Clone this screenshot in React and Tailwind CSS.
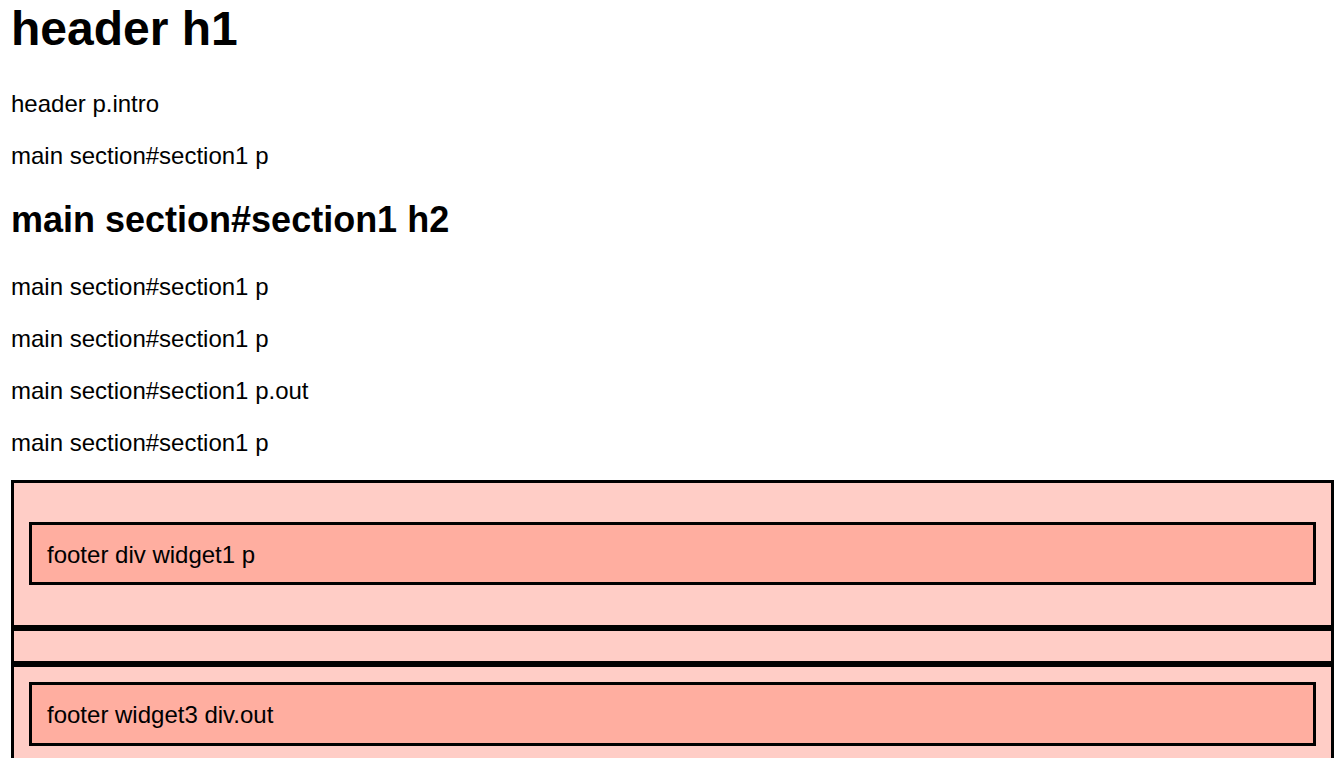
export default function App() {
  return (
    <div className="min-h-screen bg-white pl-[11px] pt-[1px] text-black font-['Liberation_Sans',Arial,sans-serif]">
      <div className="flex flex-col items-start">
        <h1 className="m-0 text-[48px] font-bold leading-[55px]">header h1</h1>
        <p className="mt-[34px] text-[24px] leading-[28px]">header p.intro</p>
        <p className="mt-[24px] text-[24px] leading-[28px]">main section#section1 p</p>
        <h2 className="mt-[29px] text-[36px] font-bold leading-[41px]">main section#section1 h2</h2>
        <p className="mt-[33px] text-[24px] leading-[28px]">main section#section1 p</p>
        <p className="mt-[24px] text-[24px] leading-[28px]">main section#section1 p</p>
        <p className="mt-[24px] text-[24px] leading-[28px]">main section#section1 p.out</p>
        <p className="mt-[24px] text-[24px] leading-[28px]">main section#section1 p</p>
      </div>
      <div className="mt-[23px] flex w-[1323px] flex-col">
        <div className="border-[3px] border-black bg-[#ffcdc6] pl-[15px] pr-[15px] py-[15px]">
          <p className="mt-[24px] mb-[25px] border-[3px] border-black bg-[#ffaea0] px-[15px] pt-[16px] pb-[14px] text-[24px] leading-[27px]">
            footer div widget1 p
          </p>
        </div>
        <div className="h-[36px] border-[3px] border-black bg-[#ffcdc6]"></div>
        <div className="border-[3px] border-black bg-[#ffcdc6] pl-[15px] pr-[15px] py-[15px]">
          <div className="border-[3px] border-black bg-[#ffaea0] px-[15px] pt-[16px] pb-[15px] text-[24px] leading-[27px]">
            footer widget3 div.out
          </div>
        </div>
      </div>
    </div>
  );
}
